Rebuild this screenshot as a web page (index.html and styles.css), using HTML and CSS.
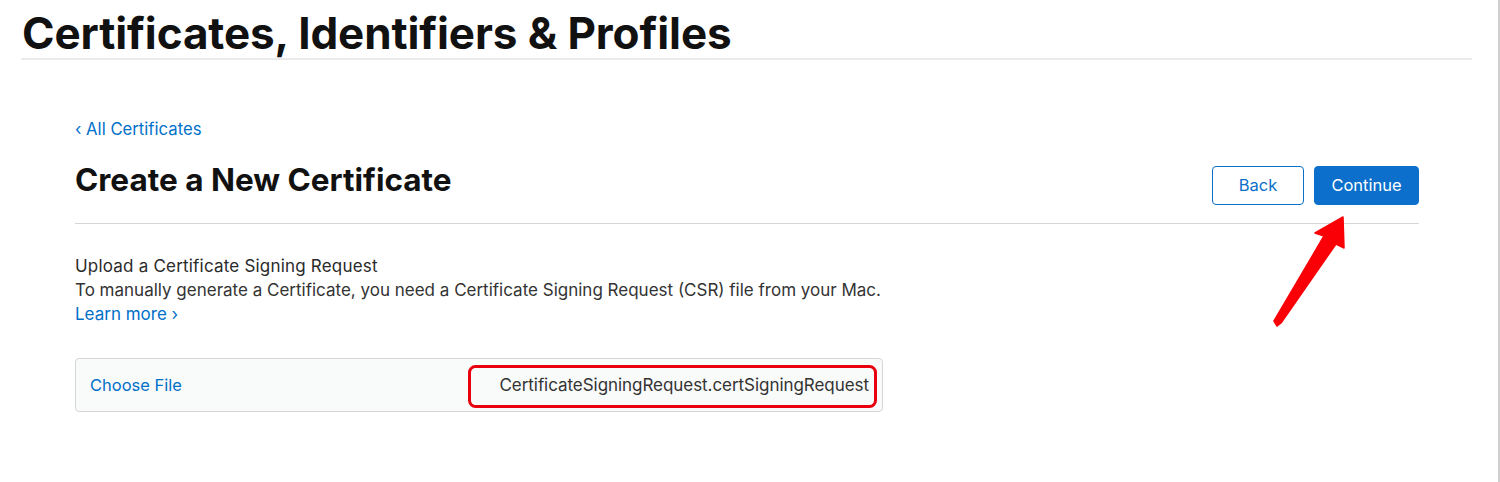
FILE: index.html
```html
<!DOCTYPE html>
<html>
<head>
<meta charset="utf-8">
<link rel="stylesheet" href="styles.css">
</head>
<body>
<div class="page">
  <header class="site-header">
    <h1 class="site-title">Certificates, Identifiers &amp; Profiles</h1>
  </header>
  <main class="content">
    <a class="back-link" href="#">‹ All Certificates</a>
    <div class="title-row">
      <h2 class="page-title">Create a New Certificate</h2>
      <div class="actions">
        <button class="btn btn-outline">Back</button>
        <button class="btn btn-primary">Continue</button>
      </div>
    </div>
    <section class="upload">
      <div class="upload-title">Upload a Certificate Signing Request</div>
      <div class="upload-desc">To manually generate a Certificate, you need a Certificate Signing Request (CSR) file from your Mac.</div>
      <a class="learn-more" href="#">Learn more ›</a>
      <div class="file-box">
        <span class="choose">Choose File</span>
        <span class="file-name">CertificateSigningRequest.certSigningRequest</span>
      </div>
    </section>
  </main>
  <svg class="annot" width="1500" height="482" viewBox="0 0 1500 482">
    <rect x="469.5" y="366.5" width="406" height="40" rx="6" ry="6" fill="none" stroke="#e8000f" stroke-width="3"/>
    <polygon points="1343,217 1315,233 1324,236 1274,321 1277,326 1281,323 1336,244 1344,248" fill="#fa0006" stroke="#fa0006" stroke-width="1.5" stroke-linejoin="round"/>
  </svg>
</div>
</body>
</html>
```

FILE: styles.css
```css
html, body {
  margin: 0;
  padding: 0;
  background: #fff;
}
body {
  font-family: Inter, "Liberation Sans", sans-serif;
  color: #333;
}
.page {
  position: relative;
  width: 1498px;
  height: 482px;
  border-right: 2px solid #cfcfcf;
  overflow: hidden;
}
.site-header {
  margin: 0 26px 0 21px;
  border-bottom: 2px solid #ebebeb;
  height: 60px;
  box-sizing: border-box;
  display: flex;
  align-items: flex-start;
}
.site-title {
  margin: 7px 0 0 1px;
  font-size: 44px;
  line-height: 52px;
  font-weight: 700;
  letter-spacing: -0.1px;
  color: #111;
}
.content {
  padding: 0 79px 0 75px;
  display: flex;
  flex-direction: column;
}
.back-link {
  margin-top: 59px;
  font-size: 16.7px;
  line-height: 20px;
  color: #0070c9;
  text-decoration: none;
  align-self: flex-start;
}
.title-row {
  margin-top: 16px;
  display: flex;
  justify-content: space-between;
  align-items: flex-start;
  border-bottom: 1px solid #d6d6d6;
  height: 68px;
}
.page-title {
  margin: 7px 0 0 0;
  font-size: 31.5px;
  line-height: 36px;
  font-weight: 700;
  color: #111;
  letter-spacing: 0;
}
.actions {
  display: flex;
  gap: 10px;
  margin-top: 11px;
}
.btn {
  font-family: inherit;
  font-size: 16.5px;
  height: 39px;
  border-radius: 4px;
  padding: 0 0 2px 0;
  cursor: pointer;
}
.btn-outline {
  width: 92px;
  background: #fff;
  border: 1px solid #0a70c9;
  color: #0a70c9;
}
.btn-primary {
  width: 105px;
  background: #0b6fcb;
  border: 1px solid #0b6fcb;
  color: #fff;
}
.upload {
  display: flex;
  flex-direction: column;
  padding-top: 30px;
}
.upload-title,
.upload-desc,
.learn-more {
  font-size: 17px;
  line-height: 24px;
}
.upload-title {
  color: #2a2a2a;
  letter-spacing: 0.2px;
}
.upload-desc { color: #333; }
.learn-more {
  color: #0070c9;
  text-decoration: none;
  align-self: flex-start;
}
.file-box {
  margin-top: 32px;
  width: 808px;
  height: 54px;
  box-sizing: border-box;
  border: 1px solid #d6d6d6;
  border-radius: 4px;
  background: #f9fafa;
  display: flex;
  align-items: center;
  justify-content: space-between;
  padding: 0 13px 0 14px;
}
.choose {
  color: #0070c9;
  font-size: 16.5px;
}
.file-name {
  color: #333;
  font-size: 17px;
  letter-spacing: -0.05px;
}
.annot {
  position: absolute;
  left: 0;
  top: 0;
  pointer-events: none;
}
```
